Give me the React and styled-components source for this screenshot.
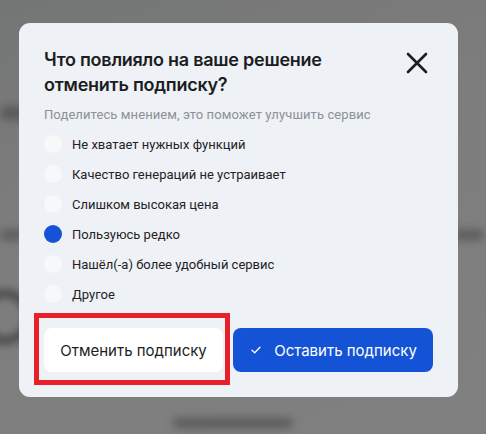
import styled, { createGlobalStyle } from "styled-components";

const GlobalStyle = createGlobalStyle`
  html, body {
    margin: 0;
    padding: 0;
  }
  body {
    font-family: Roboto, "Noto Sans", sans-serif;
    -webkit-font-smoothing: antialiased;
  }
`;

const reasons = [
  "Не хватает нужных функций",
  "Качество генераций не устраивает",
  "Слишком высокая цена",
  "Пользуюсь редко",
  "Нашёл(-а) более удобный сервис",
  "Другое",
];

export default function App() {
  const selected = 3;
  return (
    <>
      <GlobalStyle />
      <Screen>
        <BlurredPage>
          <GhostRow>
            <GhostBlob $w={30} $h={14} />
          </GhostRow>
          <GhostRow $top={110}>
            <GhostBlob $w={24} $h={10} />
            <GhostBlob $w={30} $h={10} />
          </GhostRow>
          <GhostRow $top={50}>
            <GhostRing />
          </GhostRow>
          <GhostFooter>
            <GhostBlob $w={120} $h={10} />
          </GhostFooter>
        </BlurredPage>

        <Modal>
          <Header>
            <Title>
              Что повлияло на ваше решение
              <br />
              отменить подписку?
            </Title>
            <CloseButton aria-label="Закрыть">
              <svg width="22" height="22" viewBox="0 0 22 22" fill="none">
                <path
                  d="M2 2L20 20M20 2L2 20"
                  stroke="#1b1d21"
                  strokeWidth="2.6"
                  strokeLinecap="round"
                />
              </svg>
            </CloseButton>
          </Header>
          <Subtitle>Поделитесь мнением, это поможет улучшить сервис</Subtitle>
          <OptionList>
            {reasons.map((reason, i) => (
              <Option key={reason}>
                <RadioDot $checked={i === selected} />
                <OptionLabel>{reason}</OptionLabel>
              </Option>
            ))}
          </OptionList>
          <Actions>
            <Highlighted>
              <SecondaryButton>Отменить подписку</SecondaryButton>
              <RedFrame />
            </Highlighted>
            <PrimaryButton>
              <svg width="10" height="8" viewBox="0 0 10 8" fill="none">
                <path
                  d="M1 4.2L3.7 6.8L9 1.2"
                  stroke="#ffffff"
                  strokeWidth="1.3"
                  strokeLinecap="round"
                  strokeLinejoin="round"
                />
              </svg>
              Оставить подписку
            </PrimaryButton>
          </Actions>
        </Modal>
      </Screen>
    </>
  );
}

const Screen = styled.div`
  position: relative;
  width: 486px;
  height: 434px;
  overflow: hidden;
  background: linear-gradient(160deg, #747575 0%, #7d7d7d 40%, #808080 100%);
`;

const BlurredPage = styled.div`
  display: flex;
  flex-direction: column;
  height: 100%;
  padding-top: 106px;
  box-sizing: border-box;
  filter: blur(4px);
`;

const GhostRow = styled.div`
  display: flex;
  gap: 430px;
  margin-top: ${(p) => (p.$top ? p.$top : 0)}px;
`;

const GhostBlob = styled.div`
  width: ${(p) => p.$w}px;
  height: ${(p) => p.$h}px;
  border-radius: 6px;
  background: #5a5a5a;
`;

const GhostRing = styled.div`
  width: 40px;
  height: 40px;
  margin-left: -22px;
  border-radius: 50%;
  border: 7px solid #3f3f3f;
`;

const GhostFooter = styled.div`
  display: flex;
  justify-content: center;
  margin-top: auto;
  padding-bottom: 6px;
  padding-right: 20px;
`;

const Modal = styled.div`
  position: absolute;
  left: 19px;
  top: 23px;
  width: 439px;
  height: 374px;
  box-sizing: border-box;
  padding: 24px 25px 25px;
  border-radius: 11px;
  background: #eef1f5;
  display: flex;
  flex-direction: column;
`;

const Header = styled.div`
  display: flex;
  justify-content: space-between;
  align-items: flex-start;
`;

const Title = styled.h2`
  margin: 0;
  font-family: Inter, "Noto Sans", sans-serif;
  font-size: 18px;
  line-height: 25px;
  font-weight: 600;
  color: #1b1d21;
  letter-spacing: -0.25px;
`;

const CloseButton = styled.button`
  width: 32px;
  height: 32px;
  padding: 0;
  border: none;
  background: transparent;
  display: flex;
  align-items: center;
  justify-content: center;
  cursor: pointer;
`;

const Subtitle = styled.p`
  margin: 9px 0 0;
  font-size: 13px;
  line-height: 18px;
  letter-spacing: 0.1px;
  color: #8b9099;
`;

const OptionList = styled.div`
  display: flex;
  flex-direction: column;
  margin-top: 5px;
`;

const Option = styled.label`
  display: flex;
  align-items: center;
  gap: 10px;
  height: 30px;
  cursor: pointer;
`;

const RadioDot = styled.span`
  width: 18px;
  height: 18px;
  border-radius: 50%;
  flex-shrink: 0;
  background: ${(p) => (p.$checked ? "#1553d6" : "#f7f8fa")};
`;

const OptionLabel = styled.span`
  font-size: 13px;
  color: #1f2226;
`;

const Actions = styled.div`
  display: flex;
  gap: 10px;
  margin-top: auto;
`;

const Highlighted = styled.div`
  position: relative;
  display: flex;
`;

const RedFrame = styled.div`
  position: absolute;
  left: -10px;
  top: -15px;
  right: -7px;
  bottom: -13px;
  border: 5px solid #e8202a;
  pointer-events: none;
`;

const ButtonBase = styled.button`
  height: 44px;
  border: none;
  border-radius: 8px;
  font-family: Inter, "Noto Sans", sans-serif;
  font-size: 15px;
  font-weight: 400;
  display: flex;
  align-items: center;
  justify-content: center;
  cursor: pointer;
`;

const SecondaryButton = styled(ButtonBase)`
  width: 179px;
  background: #ffffff;
  color: #1b1d21;
`;

const PrimaryButton = styled(ButtonBase)`
  width: 200px;
  gap: 13px;
  padding-left: 8px;
  background: #1553d6;
  color: #ffffff;
`;
